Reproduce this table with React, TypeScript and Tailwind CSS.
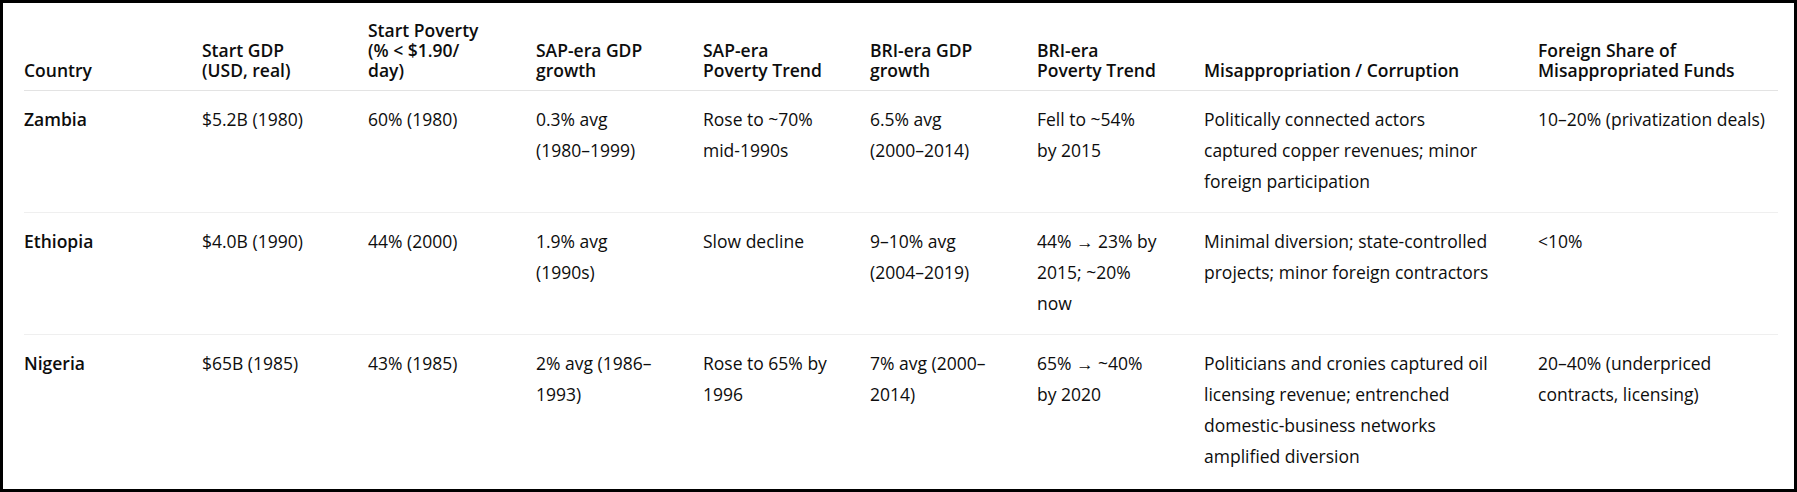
import React from "react";

const cols = "grid grid-cols-[178px_166px_168px_167px_167px_167px_167px_334px_240px]";

type Cell = string[];

const header: Cell[] = [
  ["Country"],
  ["Start GDP", "(USD, real)"],
  ["Start Poverty", "(% < $1.90/", "day)"],
  ["SAP-era GDP", "growth"],
  ["SAP-era", "Poverty Trend"],
  ["BRI-era GDP", "growth"],
  ["BRI-era", "Poverty Trend"],
  ["Misappropriation / Corruption"],
  ["Foreign Share of", "Misappropriated Funds"],
];

const rows: Cell[][] = [
  [
    ["Zambia"],
    ["$5.2B (1980)"],
    ["60% (1980)"],
    ["0.3% avg", "(1980–1999)"],
    ["Rose to ~70%", "mid-1990s"],
    ["6.5% avg", "(2000–2014)"],
    ["Fell to ~54%", "by 2015"],
    ["Politically connected actors", "captured copper revenues; minor", "foreign participation"],
    ["10–20% (privatization deals)"],
  ],
  [
    ["Ethiopia"],
    ["$4.0B (1990)"],
    ["44% (2000)"],
    ["1.9% avg", "(1990s)"],
    ["Slow decline"],
    ["9–10% avg", "(2004–2019)"],
    ["44% → 23% by", "2015; ~20%", "now"],
    ["Minimal diversion; state-controlled", "projects; minor foreign contractors"],
    ["<10%"],
  ],
  [
    ["Nigeria"],
    ["$65B (1985)"],
    ["43% (1985)"],
    ["2% avg (1986–", "1993)"],
    ["Rose to 65% by", "1996"],
    ["7% avg (2000–", "2014)"],
    ["65% → ~40%", "by 2020"],
    ["Politicians and cronies captured oil", "licensing revenue; entrenched", "domestic-business networks", "amplified diversion"],
    ["20–40% (underpriced", "contracts, licensing)"],
  ],
];

function Lines({ lines }: { lines: string[] }) {
  return (
    <>
      {lines.map((l, i) => (
        <div key={i} className="whitespace-nowrap">
          {l}
        </div>
      ))}
    </>
  );
}

export default function App() {
  return (
    <div className="w-[1797px] h-[492px] box-border border-[3px] border-black bg-white overflow-hidden font-['Open_Sans',sans-serif] text-[17.5px] text-[#0d0d0d]">
      <div className="pl-[21px] pr-[16px]">
        <div className={`${cols} items-end pt-[17px] pb-[10px] border-b border-[#e3e3e3] leading-[20px] font-semibold`}>
          {header.map((c, i) => (
            <div key={i}>
              <Lines lines={c} />
            </div>
          ))}
        </div>
        {rows.map((r, ri) => (
          <div
            key={ri}
            className={`${cols} items-start pt-[13px] pb-[15px] leading-[31px] ${ri < rows.length - 1 ? "border-b border-[#efefef]" : ""}`}
          >
            {r.map((c, ci) => (
              <div key={ci} className={ci === 0 ? "font-semibold" : ""}>
                <Lines lines={c} />
              </div>
            ))}
          </div>
        ))}
      </div>
    </div>
  );
}
